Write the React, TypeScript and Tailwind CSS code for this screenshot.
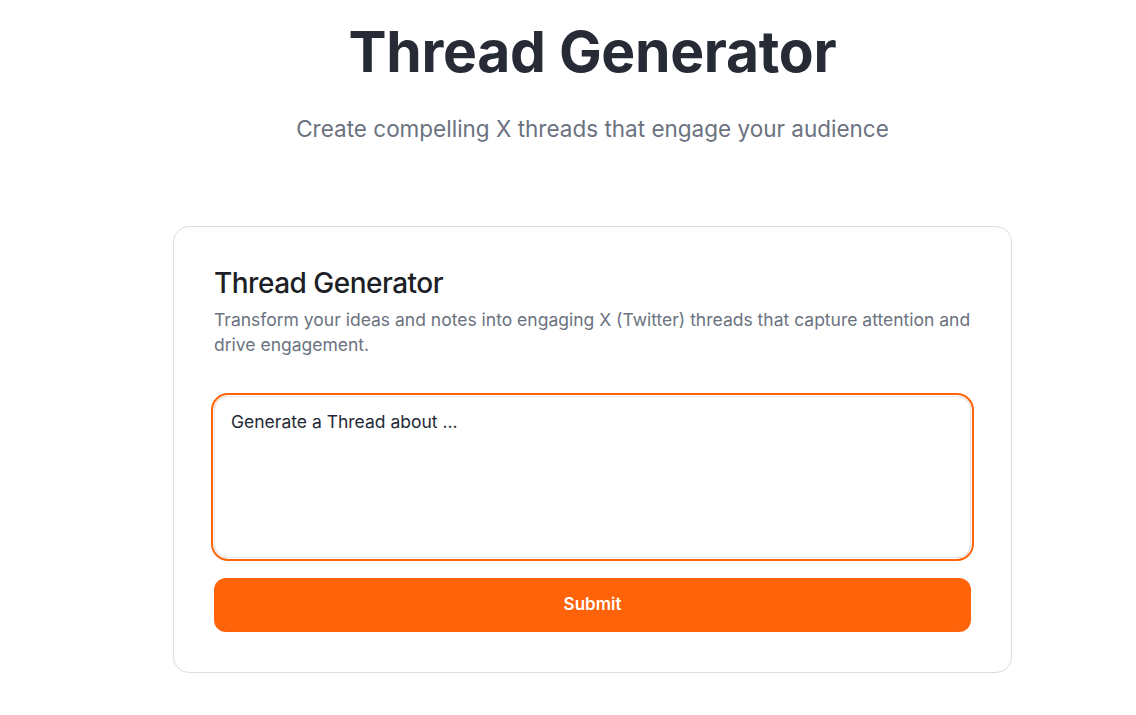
import React, { useState } from 'react';

export default function App() {
    const [topic, setTopic] = useState('Generate a Thread about ...');

    return (
        <div className="min-h-screen bg-white font-['Inter',sans-serif] text-[#1f2937]">
            <div className="flex flex-col items-center pl-[49px] pt-[17px]">
                {/* Page header */}
                <h1 className="text-[57px] leading-[70px] font-bold tracking-[-0.3px] text-[#262b35]">
                    Thread Generator
                </h1>
                <p className="mt-[27px] text-[22.5px] leading-[30px] text-[#6b7280]">
                    Create compelling X threads that engage your audience
                </p>

                {/* Generator card */}
                <div className="mt-[82px] w-[839px] rounded-2xl border border-[#dcdce4] bg-white p-10">
                    <h2 className="text-[28px] leading-[32px] font-medium tracking-[-0.5px] text-[#1c1f26]">
                        Thread Generator
                    </h2>
                    <p className="mt-2 text-[17.5px] leading-[25px] text-[#6b7280]">
                        Transform your ideas and notes into engaging X (Twitter) threads that capture attention and drive engagement.
                    </p>

                    <textarea
                        value={topic}
                        onChange={(e) => setTopic(e.target.value)}
                        className="mt-[39px] block h-[162px] w-full resize-none rounded-[14px] border border-[#e5e7eb] px-4 pt-[13px] pb-3 text-[17.5px] leading-[24px] text-[#1f2937] outline-none ring-2 ring-[#ff6309] ring-offset-1"
                    />

                    <button className="mt-5 flex h-[54px] w-full items-center justify-center rounded-xl bg-[#ff6309] text-[17px] font-semibold text-white">
                        Submit
                    </button>
                </div>
            </div>
        </div>
    );
}
